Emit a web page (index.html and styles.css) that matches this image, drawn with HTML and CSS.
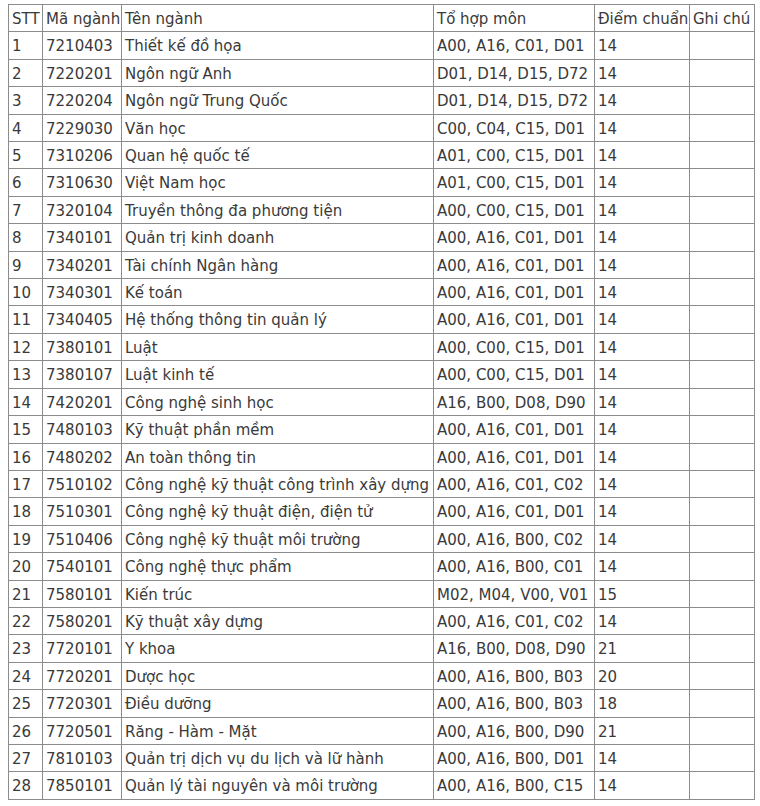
FILE: index.html
```html
<!DOCTYPE html>
<html lang="vi">
<head>
<meta charset="utf-8">
<link rel="stylesheet" href="styles.css">
</head>
<body>
<table class="scores">
<colgroup>
<col class="c-stt"><col class="c-ma"><col class="c-ten"><col class="c-to"><col class="c-diem"><col class="c-ghi">
</colgroup>
<tbody>
<tr><td>STT</td><td>Mã ngành</td><td>Tên ngành</td><td>Tổ hợp môn</td><td>Điểm chuẩn</td><td>Ghi chú</td></tr>
<tr><td>1</td><td>7210403</td><td>Thiết kế đồ họa</td><td>A00, A16, C01, D01</td><td>14</td><td></td></tr>
<tr><td>2</td><td>7220201</td><td>Ngôn ngữ Anh</td><td>D01, D14, D15, D72</td><td>14</td><td></td></tr>
<tr><td>3</td><td>7220204</td><td>Ngôn ngữ Trung Quốc</td><td>D01, D14, D15, D72</td><td>14</td><td></td></tr>
<tr><td>4</td><td>7229030</td><td>Văn học</td><td>C00, C04, C15, D01</td><td>14</td><td></td></tr>
<tr><td>5</td><td>7310206</td><td>Quan hệ quốc tế</td><td>A01, C00, C15, D01</td><td>14</td><td></td></tr>
<tr><td>6</td><td>7310630</td><td>Việt Nam học</td><td>A01, C00, C15, D01</td><td>14</td><td></td></tr>
<tr><td>7</td><td>7320104</td><td>Truyền thông đa phương tiện</td><td>A00, C00, C15, D01</td><td>14</td><td></td></tr>
<tr><td>8</td><td>7340101</td><td>Quản trị kinh doanh</td><td>A00, A16, C01, D01</td><td>14</td><td></td></tr>
<tr><td>9</td><td>7340201</td><td>Tài chính Ngân hàng</td><td>A00, A16, C01, D01</td><td>14</td><td></td></tr>
<tr><td>10</td><td>7340301</td><td>Kế toán</td><td>A00, A16, C01, D01</td><td>14</td><td></td></tr>
<tr><td>11</td><td>7340405</td><td>Hệ thống thông tin quản lý</td><td>A00, A16, C01, D01</td><td>14</td><td></td></tr>
<tr><td>12</td><td>7380101</td><td>Luật</td><td>A00, C00, C15, D01</td><td>14</td><td></td></tr>
<tr><td>13</td><td>7380107</td><td>Luật kinh tế</td><td>A00, C00, C15, D01</td><td>14</td><td></td></tr>
<tr><td>14</td><td>7420201</td><td>Công nghệ sinh học</td><td>A16, B00, D08, D90</td><td>14</td><td></td></tr>
<tr><td>15</td><td>7480103</td><td>Kỹ thuật phần mềm</td><td>A00, A16, C01, D01</td><td>14</td><td></td></tr>
<tr><td>16</td><td>7480202</td><td>An toàn thông tin</td><td>A00, A16, C01, D01</td><td>14</td><td></td></tr>
<tr><td>17</td><td>7510102</td><td>Công nghệ kỹ thuật công trình xây dựng</td><td>A00, A16, C01, C02</td><td>14</td><td></td></tr>
<tr><td>18</td><td>7510301</td><td>Công nghệ kỹ thuật điện, điện tử</td><td>A00, A16, C01, D01</td><td>14</td><td></td></tr>
<tr><td>19</td><td>7510406</td><td>Công nghệ kỹ thuật môi trường</td><td>A00, A16, B00, C02</td><td>14</td><td></td></tr>
<tr><td>20</td><td>7540101</td><td>Công nghệ thực phẩm</td><td>A00, A16, B00, C01</td><td>14</td><td></td></tr>
<tr><td>21</td><td>7580101</td><td>Kiến trúc</td><td>M02, M04, V00, V01</td><td>15</td><td></td></tr>
<tr><td>22</td><td>7580201</td><td>Kỹ thuật xây dựng</td><td>A00, A16, C01, C02</td><td>14</td><td></td></tr>
<tr><td>23</td><td>7720101</td><td>Y khoa</td><td>A16, B00, D08, D90</td><td>21</td><td></td></tr>
<tr><td>24</td><td>7720201</td><td>Dược học</td><td>A00, A16, B00, B03</td><td>20</td><td></td></tr>
<tr><td>25</td><td>7720301</td><td>Điều dưỡng</td><td>A00, A16, B00, B03</td><td>18</td><td></td></tr>
<tr><td>26</td><td>7720501</td><td>Răng - Hàm - Mặt</td><td>A00, A16, B00, D90</td><td>21</td><td></td></tr>
<tr><td>27</td><td>7810103</td><td>Quản trị dịch vụ du lịch và lữ hành</td><td>A00, A16, B00, D01</td><td>14</td><td></td></tr>
<tr><td>28</td><td>7850101</td><td>Quản lý tài nguyên và môi trường</td><td>A00, A16, B00, C15</td><td>14</td><td></td></tr>
</tbody>
</table>
</body>
</html>
```

FILE: styles.css
```css
html, body {
  margin: 0;
  padding: 0;
  background: #ffffff;
}
body {
  padding: 4px 0 0 8px;
}
.scores {
  border-collapse: collapse;
  table-layout: fixed;
  width: 747px;
  font-family: "DejaVu Sans", Verdana, sans-serif;
  font-size: 15px;
  color: #3a3a3a;
}
.scores td {
  border: 1px solid #8c8c8c;
  padding: 5px 2px 3px 3px;
  line-height: 18.4px;
  white-space: nowrap;
  overflow: hidden;
  vertical-align: middle;
}
.c-stt { width: 34px; }
.c-ma { width: 79px; }
.c-ten { width: 312px; }
.c-to { width: 161px; }
.c-diem { width: 95px; }
.c-ghi { width: 65px; }
```
